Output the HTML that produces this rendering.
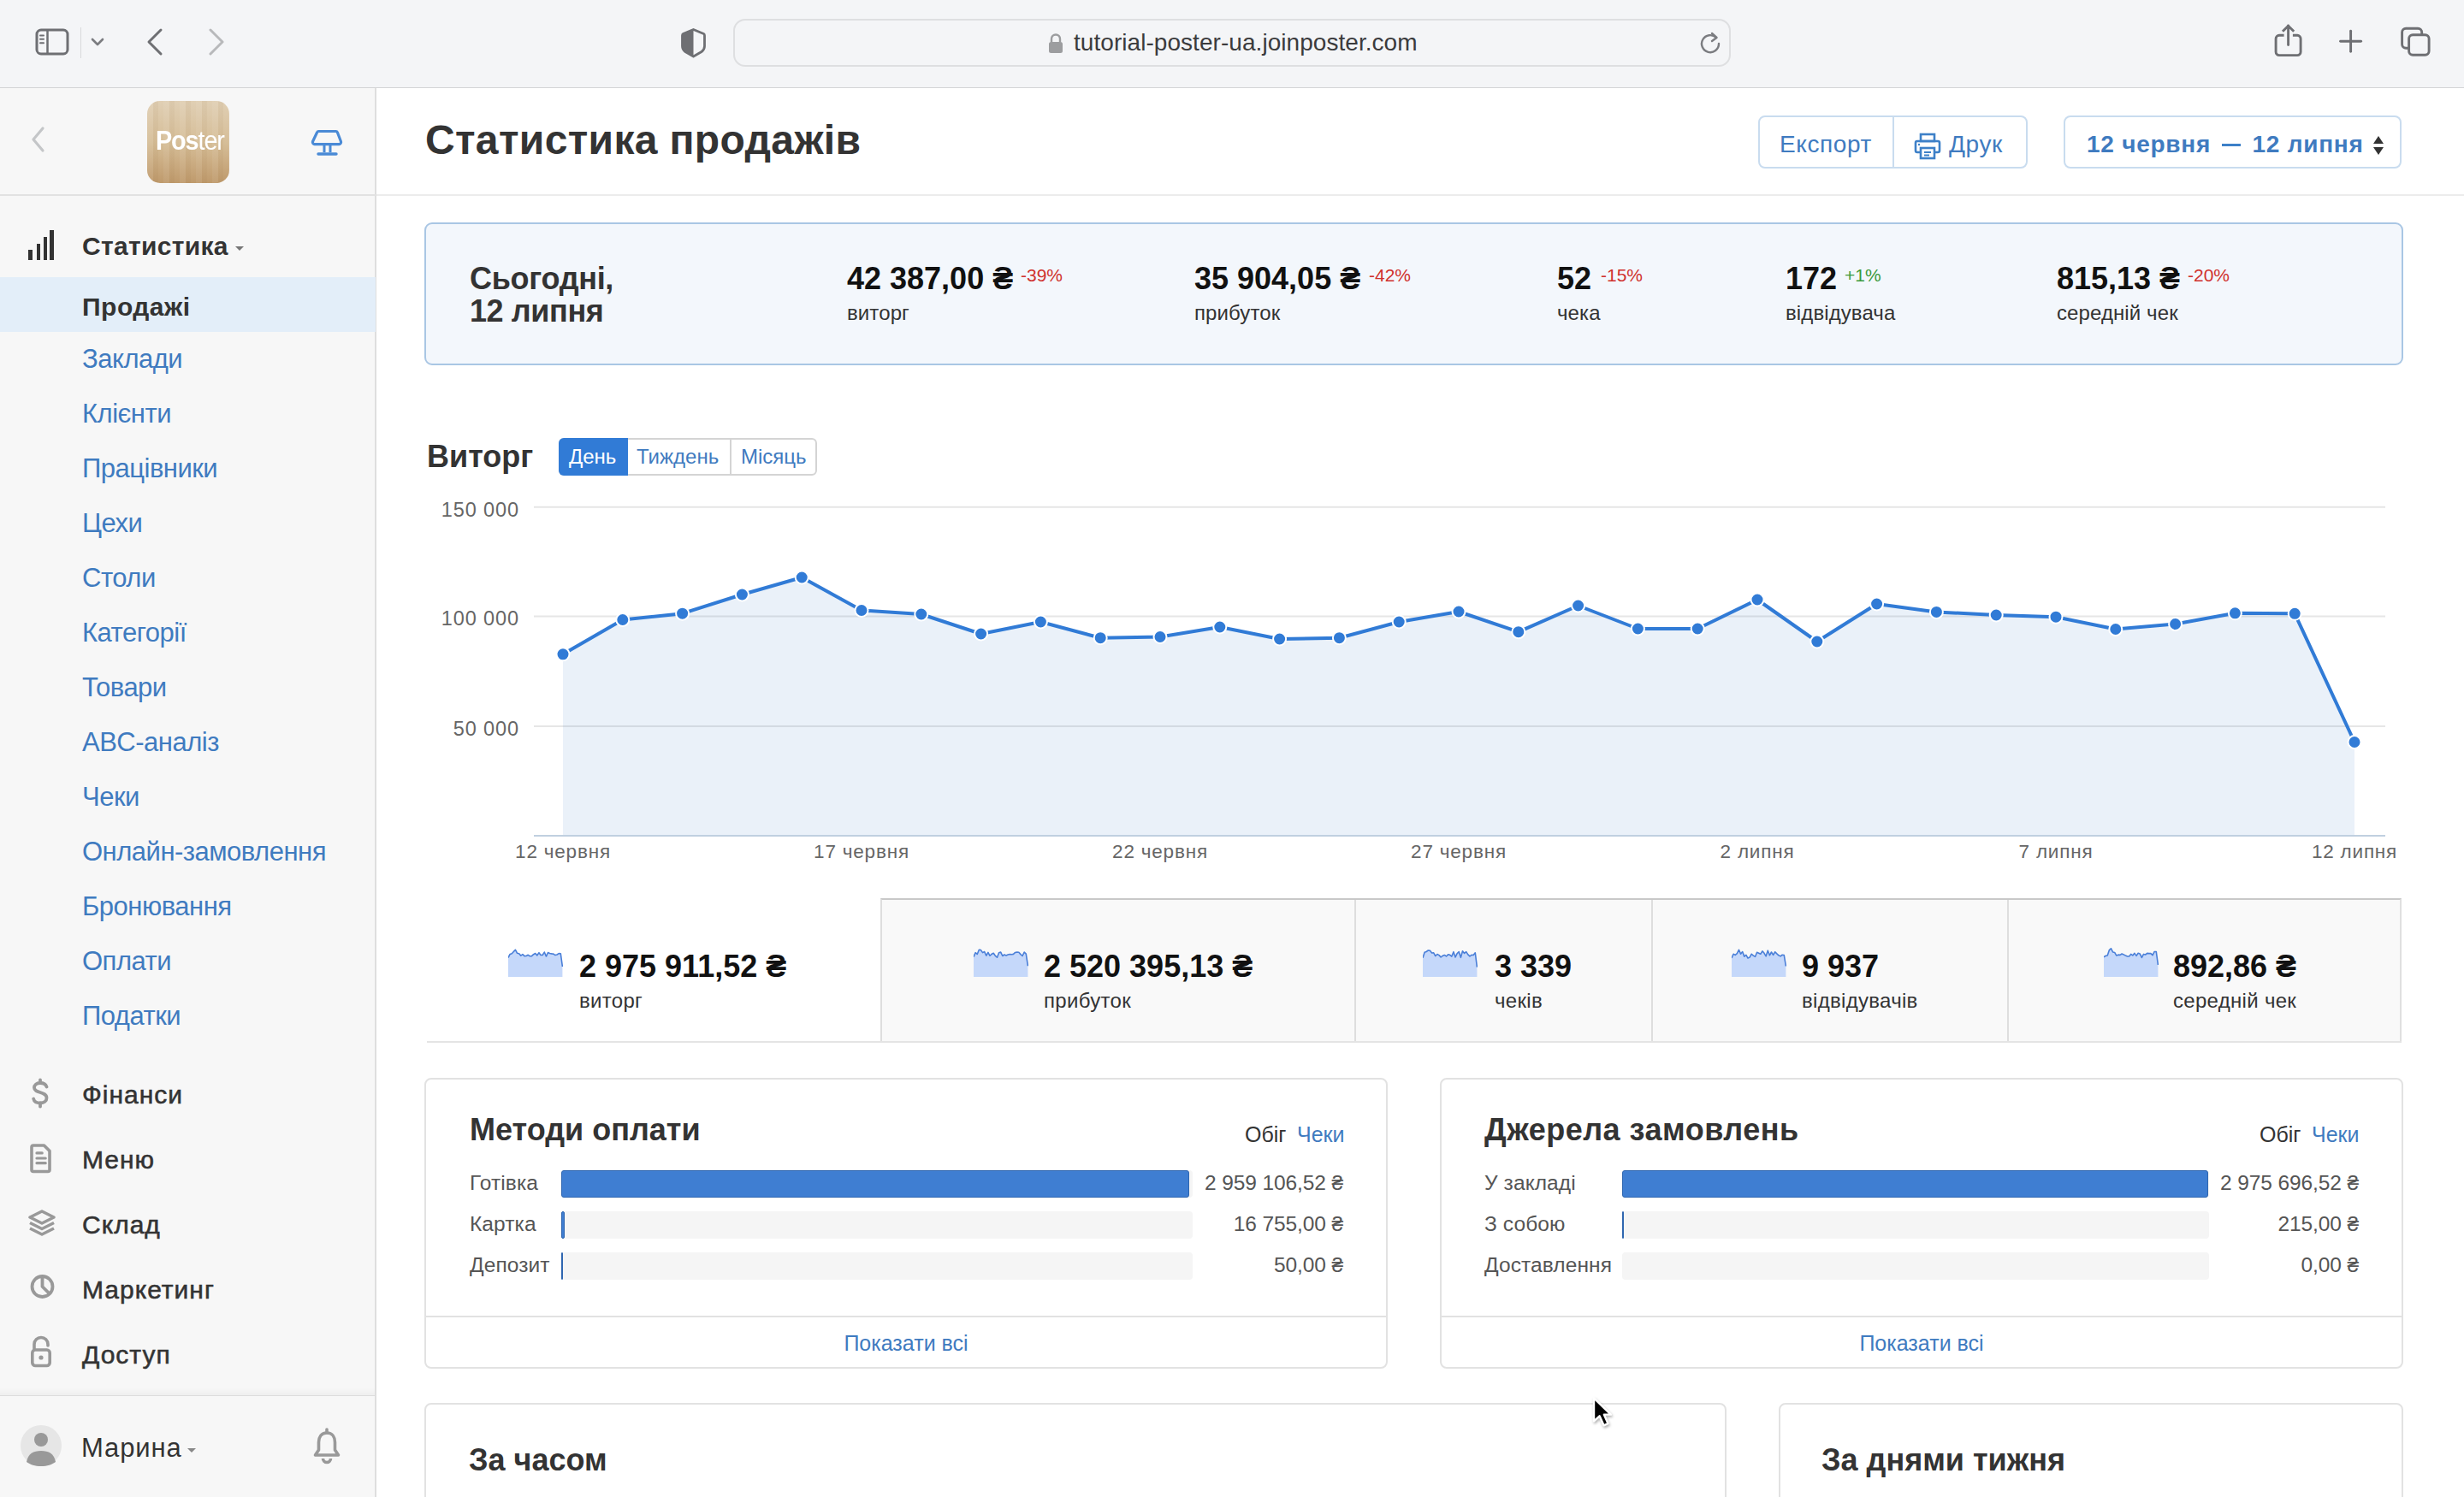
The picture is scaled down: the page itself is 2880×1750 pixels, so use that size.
<!DOCTYPE html>
<html><head><meta charset="utf-8"><title>Статистика продажів</title>
<style>
html,body{margin:0;padding:0;}
body{width:2880px;height:1750px;position:relative;overflow:hidden;background:#fff;font-family:"Liberation Sans", sans-serif;}
.r{position:absolute;}
.t{position:absolute;line-height:1;white-space:nowrap;}
</style></head><body>
<div class="r" style="left:0px;top:0px;width:2880px;height:102px;background:#f4f5f7;"></div>
<div class="r" style="left:0px;top:102px;width:2880px;height:1.3px;background:#d3d4d6;"></div>
<svg class="r" style="left:40px;top:32px" width="44" height="34" viewBox="0 0 44 34">
<rect x="3" y="3" width="36" height="28" rx="5" fill="none" stroke="#6e6f73" stroke-width="3"/>
<line x1="15.5" y1="3" x2="15.5" y2="31" stroke="#6e6f73" stroke-width="2.5"/>
<line x1="7" y1="9.5" x2="11" y2="9.5" stroke="#6e6f73" stroke-width="2" stroke-linecap="round"/>
<line x1="7" y1="13.8" x2="11" y2="13.8" stroke="#6e6f73" stroke-width="2" stroke-linecap="round"/>
<line x1="7" y1="18.2" x2="11" y2="18.2" stroke="#6e6f73" stroke-width="2" stroke-linecap="round"/>
</svg>
<div class="r" style="left:94px;top:32px;width:1px;height:36px;background:#d8d9db;"></div>
<svg class="r" style="left:104px;top:42px" width="20" height="14" viewBox="0 0 20 14">
<polyline points="4,4 10,10 16,4" fill="none" stroke="#7b7c80" stroke-width="2.6" stroke-linecap="round" stroke-linejoin="round"/></svg>
<svg class="r" style="left:168px;top:30px" width="26" height="38" viewBox="0 0 26 38">
<polyline points="20,5 6,19 20,33" fill="none" stroke="#6e6f73" stroke-width="3" stroke-linecap="round" stroke-linejoin="round"/></svg>
<svg class="r" style="left:240px;top:30px" width="26" height="38" viewBox="0 0 26 38">
<polyline points="6,5 20,19 6,33" fill="none" stroke="#b8b9bb" stroke-width="3" stroke-linecap="round" stroke-linejoin="round"/></svg>
<svg class="r" style="left:794px;top:30px" width="34" height="38" viewBox="0 0 34 38">
<path d="M16.5 4.5 L28.5 9.5 Q29.5 10 29.5 11.5 V24 Q29.5 28 26 30.5 L16.5 36 L7 30.5 Q3.5 28 3.5 24 V11.5 Q3.5 10 4.5 9.5 Z" fill="none" stroke="#6e6f73" stroke-width="2.8" stroke-linejoin="round"/>
<path d="M16.5 4 L4.5 9.5 Q3.5 10 3.5 11.5 V24 Q3.5 28 7 30.5 L16.5 36 Z" fill="#6e6f73"/></svg>
<div class="r" style="left:857px;top:22px;width:1166px;height:56px;background:#f4f5f7;border:2px solid #dedfe1;border-radius:14px;box-sizing:border-box;"></div>
<svg class="r" style="left:1224px;top:38px" width="20" height="26" viewBox="0 0 20 26">
<path d="M5 11 V7.5 a5 5 0 0 1 10 0 V11" fill="none" stroke="#9c9d9f" stroke-width="2.4"/>
<rect x="2" y="11" width="16" height="13" rx="2.5" fill="#9c9d9f"/></svg>
<div class="t " style="left:1255px;top:36.3px;font-size:28px;font-weight:400;color:#3b3b3d;letter-spacing:0.05px;">tutorial-poster-ua.joinposter.com</div>
<svg class="r" style="left:1984px;top:34px" width="30" height="32" viewBox="0 0 30 32">
<path d="M22 10 A10 10 0 1 0 25 17" fill="none" stroke="#7b7c80" stroke-width="2.4" stroke-linecap="round"/>
<polyline points="17,5 22.5,10 17,14" fill="none" stroke="#7b7c80" stroke-width="2.4" stroke-linecap="round" stroke-linejoin="round"/></svg>
<svg class="r" style="left:2654px;top:26px" width="42" height="44" viewBox="0 0 42 44">
<path d="M15.6 15.3 H10 a3.9 3.9 0 0 0 -3.9 3.9 V34.7 a3.9 3.9 0 0 0 3.9 3.9 H31.2 a3.9 3.9 0 0 0 3.9 -3.9 V19.2 a3.9 3.9 0 0 0 -3.9 -3.9 H25.9" fill="none" stroke="#6e6f73" stroke-width="2.9"/>
<line x1="20.6" y1="4" x2="20.6" y2="26.5" stroke="#6e6f73" stroke-width="2.9" stroke-linecap="round"/>
<polyline points="14,10.8 20.6,4.2 27.2,10.8" fill="none" stroke="#6e6f73" stroke-width="2.9" stroke-linejoin="round"/></svg>
<svg class="r" style="left:2730px;top:32px" width="34" height="34" viewBox="0 0 34 34">
<line x1="17.6" y1="4.2" x2="17.6" y2="28.2" stroke="#6e6f73" stroke-width="2.9" stroke-linecap="round"/>
<line x1="5.6" y1="16.2" x2="29.6" y2="16.2" stroke="#6e6f73" stroke-width="2.9" stroke-linecap="round"/></svg>
<svg class="r" style="left:2804px;top:30px" width="40" height="40" viewBox="0 0 40 40">
<rect x="3.6" y="3.3" width="23.1" height="23" rx="4.5" fill="none" stroke="#6e6f73" stroke-width="2.9"/>
<rect x="11.6" y="10.7" width="23.5" height="23.5" rx="4.5" fill="#f4f5f7" stroke="#6e6f73" stroke-width="2.9"/></svg>
<div class="r" style="left:0px;top:103px;width:439px;height:1647px;background:#f7f7f7;"></div>
<div class="r" style="left:438px;top:103px;width:2px;height:1647px;background:#dedede;"></div>
<div class="r" style="left:0px;top:227px;width:439px;height:2px;background:#e2e2e2;"></div>
<svg class="r" style="left:34px;top:146px" width="22" height="34" viewBox="0 0 22 34">
<polyline points="16,4 5,17 16,30" fill="none" stroke="#c4c6c8" stroke-width="3.2" stroke-linecap="round" stroke-linejoin="round"/></svg>
<div class="r" style="left:172px;top:118px;width:96px;height:96px;border-radius:15px;background:linear-gradient(180deg,#e0cfb4 0%,#d6be98 50%,#bf9a6c 100%);overflow:hidden;"></div>
<div class="r" style="left:172px;top:118px;width:96px;height:96px;border-radius:15px;background:repeating-linear-gradient(90deg,rgba(255,255,255,0.06) 0 7px,rgba(120,80,30,0.05) 7px 13px,rgba(255,255,255,0) 13px 19px);"></div>
<div class="t " style="left:182px;top:148.8px;font-size:31px;font-weight:300;color:#ffffff;letter-spacing:-1.2px;transform:scaleX(0.93);transform-origin:0 0;"><b style="font-weight:700">Pos</b>ter</div>
<svg class="r" style="left:362px;top:149px" width="40" height="36" viewBox="0 0 40 36">
<path d="M10.5 4.5 H30.5 a2 2 0 0 1 1.9 1.3 L36.5 16.5 a2.5 2.5 0 0 1 -2.3 3.2 H5.8 a2.5 2.5 0 0 1 -2.3 -3.2 L8.6 5.8 a2 2 0 0 1 1.9 -1.3 Z" fill="none" stroke="#4a8ad6" stroke-width="3.2" stroke-linejoin="round"/>
<line x1="17" y1="20" x2="17" y2="29" stroke="#4a8ad6" stroke-width="3"/>
<line x1="24" y1="20" x2="24" y2="29" stroke="#4a8ad6" stroke-width="3"/>
<line x1="10" y1="31" x2="31" y2="31" stroke="#4a8ad6" stroke-width="3.4" stroke-linecap="round"/></svg>
<div class="r" style="left:33px;top:292px;width:4.5px;height:11.5px;background:#333;"></div>
<div class="r" style="left:42.5px;top:285px;width:4.5px;height:18.5px;background:#333;"></div>
<div class="r" style="left:50.5px;top:277px;width:4.5px;height:26.5px;background:#333;"></div>
<div class="r" style="left:58px;top:268.5px;width:4.5px;height:35px;background:#333;"></div>
<div class="t " style="left:96px;top:273.1px;font-size:30px;font-weight:700;color:#333333;letter-spacing:0.3px;">Статистика</div>
<svg class="r" style="left:274px;top:287px" width="12" height="8" viewBox="0 0 12 8"><polygon points="1,1 11,1 6,6" fill="#777"/></svg>
<div class="r" style="left:0px;top:324px;width:439px;height:64px;background:#e3eef9;"></div>
<div class="t " style="left:96px;top:343.6px;font-size:30px;font-weight:700;color:#333333;letter-spacing:0.5px;">Продажі</div>
<div class="t " style="left:96px;top:403.8px;font-size:31px;font-weight:400;color:#3f7bc0;letter-spacing:-0.5px;">Заклади</div>
<div class="t " style="left:96px;top:467.8px;font-size:31px;font-weight:400;color:#3f7bc0;letter-spacing:-0.5px;">Клієнти</div>
<div class="t " style="left:96px;top:531.8px;font-size:31px;font-weight:400;color:#3f7bc0;letter-spacing:-0.5px;">Працівники</div>
<div class="t " style="left:96px;top:595.8px;font-size:31px;font-weight:400;color:#3f7bc0;letter-spacing:-0.5px;">Цехи</div>
<div class="t " style="left:96px;top:659.8px;font-size:31px;font-weight:400;color:#3f7bc0;letter-spacing:-0.5px;">Столи</div>
<div class="t " style="left:96px;top:723.8px;font-size:31px;font-weight:400;color:#3f7bc0;letter-spacing:-0.5px;">Категорії</div>
<div class="t " style="left:96px;top:787.8px;font-size:31px;font-weight:400;color:#3f7bc0;letter-spacing:-0.5px;">Товари</div>
<div class="t " style="left:96px;top:851.8px;font-size:31px;font-weight:400;color:#3f7bc0;letter-spacing:-0.5px;">ABC-аналіз</div>
<div class="t " style="left:96px;top:915.8px;font-size:31px;font-weight:400;color:#3f7bc0;letter-spacing:-0.5px;">Чеки</div>
<div class="t " style="left:96px;top:979.8px;font-size:31px;font-weight:400;color:#3f7bc0;letter-spacing:-0.5px;">Онлайн-замовлення</div>
<div class="t " style="left:96px;top:1043.8px;font-size:31px;font-weight:400;color:#3f7bc0;letter-spacing:-0.5px;">Бронювання</div>
<div class="t " style="left:96px;top:1107.8px;font-size:31px;font-weight:400;color:#3f7bc0;letter-spacing:-0.5px;">Оплати</div>
<div class="t " style="left:96px;top:1171.8px;font-size:31px;font-weight:400;color:#3f7bc0;letter-spacing:-0.5px;">Податки</div>
<div class="t " style="left:96px;top:1264.6px;font-size:30px;font-weight:400;color:#333333;letter-spacing:1.0px;-webkit-text-stroke:0.55px #333;">Фінанси</div>
<div class="t " style="left:96px;top:1340.6px;font-size:30px;font-weight:400;color:#333333;letter-spacing:1.0px;-webkit-text-stroke:0.55px #333;">Меню</div>
<div class="t " style="left:96px;top:1416.6px;font-size:30px;font-weight:400;color:#333333;letter-spacing:1.0px;-webkit-text-stroke:0.55px #333;">Склад</div>
<div class="t " style="left:96px;top:1492.6px;font-size:30px;font-weight:400;color:#333333;letter-spacing:1.0px;-webkit-text-stroke:0.55px #333;">Маркетинг</div>
<div class="t " style="left:96px;top:1568.6px;font-size:30px;font-weight:400;color:#333333;letter-spacing:1.0px;-webkit-text-stroke:0.55px #333;">Доступ</div>
<svg class="r" style="left:30px;top:1260px" width="34" height="38" viewBox="0 0 34 38">
<path d="M24.5 10.5 C23.5 7.5 20.5 6 17 6 C12.5 6 10 8.5 10 11.5 C10 18.5 24.5 15.5 24.5 23.5 C24.5 27 21.5 29.5 17 29.5 C12.5 29.5 9.8 27.5 9.2 24.5" fill="none" stroke="#999" stroke-width="3.8" stroke-linecap="round"/>
<line x1="17" y1="2.5" x2="17" y2="6" stroke="#999" stroke-width="3.8" stroke-linecap="round"/>
<line x1="17" y1="29.5" x2="17" y2="33.5" stroke="#999" stroke-width="3.8" stroke-linecap="round"/></svg>
<svg class="r" style="left:34px;top:1335px" width="28" height="38" viewBox="0 0 28 38">
<path d="M5 4 H17.5 L24 10.5 V32.5 a2 2 0 0 1 -2 2 H5 a2 2 0 0 1 -2 -2 V6 a2 2 0 0 1 2 -2 Z" fill="none" stroke="#999" stroke-width="3.6" stroke-linejoin="round"/>
<line x1="9" y1="12.9" x2="15.2" y2="12.9" stroke="#999" stroke-width="3.2" stroke-linecap="round"/>
<line x1="9" y1="19" x2="19.2" y2="19" stroke="#999" stroke-width="3.2" stroke-linecap="round"/>
<line x1="9" y1="24.7" x2="19.2" y2="24.7" stroke="#999" stroke-width="3.2" stroke-linecap="round"/></svg>
<svg class="r" style="left:31px;top:1412px" width="36" height="36" viewBox="0 0 36 36">
<path d="M18 4 L32 11 L18 18 L4 11 Z" fill="none" stroke="#999" stroke-width="3.6" stroke-linejoin="round"/>
<path d="M4 17.5 L18 24.5 L32 17.5" fill="none" stroke="#999" stroke-width="3.6" stroke-linejoin="round"/>
<path d="M4 24 L18 31 L32 24" fill="none" stroke="#999" stroke-width="3.6" stroke-linejoin="round"/></svg>
<svg class="r" style="left:34px;top:1487px" width="34" height="34" viewBox="0 0 34 34">
<circle cx="15.5" cy="17" r="12" fill="none" stroke="#999" stroke-width="3.8"/>
<path d="M15.5 5 V17 L24.5 26" fill="none" stroke="#999" stroke-width="3.8" stroke-linejoin="round"/></svg>
<svg class="r" style="left:34px;top:1561px" width="28" height="40" viewBox="0 0 28 40">
<path d="M6 16 V10.5 a8 8 0 0 1 16 0 V12" fill="none" stroke="#999" stroke-width="3.6" stroke-linecap="round"/>
<rect x="3.8" y="17" width="20.4" height="18.5" rx="3.5" fill="none" stroke="#999" stroke-width="3.6"/>
<circle cx="14" cy="26" r="2.6" fill="#999"/></svg>
<div class="r" style="left:0px;top:1622px;width:438px;height:9px;background:linear-gradient(180deg,rgba(0,0,0,0) 0%,rgba(0,0,0,0.035) 100%);"></div>
<div class="r" style="left:0px;top:1630.5px;width:438px;height:1.6px;background:#dcdcdc;"></div>
<svg class="r" style="left:24px;top:1666px" width="48" height="48" viewBox="0 0 48 48">
<circle cx="24" cy="24" r="24" fill="#e6e6e6"/>
<circle cx="24" cy="17" r="8" fill="#999"/>
<path d="M7 43 C9 33 15 30 24 30 C33 30 39 33 41 43 C37 46 31 48 24 48 C17 48 11 46 7 43 Z" fill="#999"/></svg>
<div class="t " style="left:95px;top:1676.8px;font-size:31px;font-weight:400;color:#333333;letter-spacing:0.9px;">Марина</div>
<svg class="r" style="left:218px;top:1692px" width="12" height="8" viewBox="0 0 12 8"><polygon points="1,1 11,1 6,6" fill="#888"/></svg>
<svg class="r" style="left:364px;top:1668px" width="36" height="46" viewBox="0 0 36 46">
<path d="M18 7 C11.5 7 8.5 12 8.5 18 V27 L4.5 33 H31.5 L27.5 27 V18 C27.5 12 24.5 7 18 7 Z" fill="none" stroke="#999" stroke-width="3.6" stroke-linejoin="round"/>
<line x1="18" y1="3" x2="18" y2="7" stroke="#999" stroke-width="3.6" stroke-linecap="round"/>
<path d="M13.5 37 a4.5 4.5 0 0 0 9 0" fill="none" stroke="#999" stroke-width="3.6"/></svg>
<div class="r" style="left:440px;top:227px;width:2440px;height:2px;background:#ececec;"></div>
<div class="t " style="left:497px;top:140.4px;font-size:48px;font-weight:700;color:#333333;letter-spacing:0.35px;">Статистика продажів</div>
<div class="r" style="left:2055px;top:135px;width:315px;height:62px;border:2px solid #c9dcef;border-radius:8px;box-sizing:border-box;background:#fff;"></div>
<div class="r" style="left:2212px;top:135px;width:2px;height:62px;background:#c9dcef;"></div>
<div class="t " style="left:2080px;top:155.0px;font-size:28px;font-weight:400;color:#3f7bc0;letter-spacing:0.6px;">Експорт</div>
<svg class="r" style="left:2236px;top:154px" width="34" height="34" viewBox="0 0 34 34">
<rect x="9" y="3" width="16" height="8" fill="none" stroke="#3d80c8" stroke-width="2.6"/>
<path d="M8 24 H5 a2 2 0 0 1 -2 -2 V13 a2 2 0 0 1 2 -2 H29 a2 2 0 0 1 2 2 V22 a2 2 0 0 1 -2 2 H26" fill="none" stroke="#3d80c8" stroke-width="2.6"/>
<rect x="9" y="19" width="16" height="12" fill="#fff" stroke="#3d80c8" stroke-width="2.6"/>
<line x1="13" y1="24" x2="21" y2="24" stroke="#3d80c8" stroke-width="2"/>
<line x1="13" y1="27.5" x2="19" y2="27.5" stroke="#3d80c8" stroke-width="2"/>
<circle cx="7" cy="15" r="1.2" fill="#3d80c8"/></svg>
<div class="t " style="left:2278px;top:155.0px;font-size:28px;font-weight:400;color:#3f7bc0;letter-spacing:0.6px;">Друк</div>
<div class="r" style="left:2412px;top:135px;width:395px;height:62px;border:2px solid #c9dcef;border-radius:8px;box-sizing:border-box;background:#fff;"></div>
<div class="t " style="left:2439px;top:155.0px;font-size:28px;font-weight:700;color:#3f7bc0;letter-spacing:0.75px;">12 червня</div>
<div class="r" style="left:2597px;top:167.5px;width:22px;height:3.2px;background:#3d80c8;"></div>
<div class="t " style="left:2632.5px;top:155.0px;font-size:28px;font-weight:700;color:#3f7bc0;letter-spacing:0.75px;">12 липня</div>
<svg class="r" style="left:2772px;top:157px" width="16" height="26" viewBox="0 0 16 26">
<polygon points="8,2 14,11 2,11" fill="#333"/><polygon points="2,15 14,15 8,24" fill="#333"/></svg>
<div class="r" style="left:496px;top:260px;width:2313px;height:167px;background:#f3f7fc;border:2px solid #a9c6e4;border-radius:9px;box-sizing:border-box;"></div>
<div class="t " style="left:549px;top:307.5px;font-size:36px;font-weight:700;color:#333333;letter-spacing:-0.3px;">Сьогодні,</div>
<div class="t " style="left:549px;top:345.5px;font-size:36px;font-weight:700;color:#333333;letter-spacing:-0.4px;">12 липня</div>
<div class="t " style="left:990px;top:307.5px;font-size:36px;font-weight:700;color:#111;">42 387,00 ₴</div>
<div class="t " style="left:1193px;top:311.2px;font-size:21px;font-weight:400;color:#d0312d;">-39%</div>
<div class="t " style="left:990px;top:353.7px;font-size:24px;font-weight:400;color:#333333;letter-spacing:0.1px;">виторг</div>
<div class="t " style="left:1396px;top:307.5px;font-size:36px;font-weight:700;color:#111;">35 904,05 ₴</div>
<div class="t " style="left:1600px;top:311.2px;font-size:21px;font-weight:400;color:#d0312d;">-42%</div>
<div class="t " style="left:1396px;top:353.7px;font-size:24px;font-weight:400;color:#333333;letter-spacing:0.1px;">прибуток</div>
<div class="t " style="left:1820px;top:307.5px;font-size:36px;font-weight:700;color:#111;">52</div>
<div class="t " style="left:1871px;top:311.2px;font-size:21px;font-weight:400;color:#d0312d;">-15%</div>
<div class="t " style="left:1820px;top:353.7px;font-size:24px;font-weight:400;color:#333333;letter-spacing:0.1px;">чека</div>
<div class="t " style="left:2087px;top:307.5px;font-size:36px;font-weight:700;color:#111;">172</div>
<div class="t " style="left:2156px;top:311.2px;font-size:21px;font-weight:400;color:#3b9a3b;">+1%</div>
<div class="t " style="left:2087px;top:353.7px;font-size:24px;font-weight:400;color:#333333;letter-spacing:0.1px;">відвідувача</div>
<div class="t " style="left:2404px;top:307.5px;font-size:36px;font-weight:700;color:#111;">815,13 ₴</div>
<div class="t " style="left:2557px;top:311.2px;font-size:21px;font-weight:400;color:#d0312d;">-20%</div>
<div class="t " style="left:2404px;top:353.7px;font-size:24px;font-weight:400;color:#333333;letter-spacing:0.1px;">середній чек</div>
<div class="t " style="left:499px;top:515.5px;font-size:36px;font-weight:700;color:#333333;">Виторг</div>
<div class="r" style="left:653px;top:512px;width:302px;height:44px;border:2px solid #d4d4d4;border-radius:6px;box-sizing:border-box;background:#fff;"></div>
<div class="r" style="left:653px;top:512px;width:81px;height:44px;background:#317bd6;border-radius:6px 0 0 6px;"></div>
<div class="r" style="left:853px;top:512px;width:2px;height:44px;background:#d4d4d4;"></div>
<div class="t " style="left:665px;top:521.7px;font-size:24px;font-weight:400;color:#fff;">День</div>
<div class="t " style="left:744px;top:521.7px;font-size:24px;font-weight:400;color:#3f7bc0;">Тиждень</div>
<div class="t " style="left:866px;top:521.7px;font-size:24px;font-weight:400;color:#3f7bc0;">Місяць</div>
<svg class="r" style="left:0;top:0" width="2880" height="1750" viewBox="0 0 2880 1750">
<line x1="624" y1="592.7" x2="2788" y2="592.7" stroke="#e6e6e6" stroke-width="2"/>
<line x1="624" y1="720.5" x2="2788" y2="720.5" stroke="#e6e6e6" stroke-width="2"/>
<line x1="624" y1="849" x2="2788" y2="849" stroke="#e6e6e6" stroke-width="2"/>
<polygon points="658,977 658.0,764.8 727.8,724.5 797.6,717.2 867.4,695.0 937.2,675.0 1007.0,713.5 1076.8,718.0 1146.6,741.0 1216.4,727.0 1286.2,745.7 1356.0,744.5 1425.8,733.0 1495.6,747.0 1565.4,745.7 1635.2,727.0 1705.0,715.0 1774.8,738.7 1844.6,708.0 1914.4,735.0 1984.2,735.0 2054.0,701.0 2123.8,750.0 2193.6,706.0 2263.4,715.4 2333.2,719.0 2403.0,721.2 2472.8,735.5 2542.6,729.5 2612.4,716.8 2682.2,717.3 2752.0,867.5 2752,977" fill="rgba(61,128,200,0.11)"/>
<line x1="624" y1="977" x2="2788" y2="977" stroke="#c0d0e0" stroke-width="2"/>
<polyline points="658.0,764.8 727.8,724.5 797.6,717.2 867.4,695.0 937.2,675.0 1007.0,713.5 1076.8,718.0 1146.6,741.0 1216.4,727.0 1286.2,745.7 1356.0,744.5 1425.8,733.0 1495.6,747.0 1565.4,745.7 1635.2,727.0 1705.0,715.0 1774.8,738.7 1844.6,708.0 1914.4,735.0 1984.2,735.0 2054.0,701.0 2123.8,750.0 2193.6,706.0 2263.4,715.4 2333.2,719.0 2403.0,721.2 2472.8,735.5 2542.6,729.5 2612.4,716.8 2682.2,717.3 2752.0,867.5" fill="none" stroke="#317bd6" stroke-width="4" stroke-linejoin="round"/>
<circle cx="658.0" cy="764.8" r="7.5" fill="#317bd6" stroke="#fff" stroke-width="2"/>
<circle cx="727.8" cy="724.5" r="7.5" fill="#317bd6" stroke="#fff" stroke-width="2"/>
<circle cx="797.6" cy="717.2" r="7.5" fill="#317bd6" stroke="#fff" stroke-width="2"/>
<circle cx="867.4" cy="695.0" r="7.5" fill="#317bd6" stroke="#fff" stroke-width="2"/>
<circle cx="937.2" cy="675.0" r="7.5" fill="#317bd6" stroke="#fff" stroke-width="2"/>
<circle cx="1007.0" cy="713.5" r="7.5" fill="#317bd6" stroke="#fff" stroke-width="2"/>
<circle cx="1076.8" cy="718.0" r="7.5" fill="#317bd6" stroke="#fff" stroke-width="2"/>
<circle cx="1146.6" cy="741.0" r="7.5" fill="#317bd6" stroke="#fff" stroke-width="2"/>
<circle cx="1216.4" cy="727.0" r="7.5" fill="#317bd6" stroke="#fff" stroke-width="2"/>
<circle cx="1286.2" cy="745.7" r="7.5" fill="#317bd6" stroke="#fff" stroke-width="2"/>
<circle cx="1356.0" cy="744.5" r="7.5" fill="#317bd6" stroke="#fff" stroke-width="2"/>
<circle cx="1425.8" cy="733.0" r="7.5" fill="#317bd6" stroke="#fff" stroke-width="2"/>
<circle cx="1495.6" cy="747.0" r="7.5" fill="#317bd6" stroke="#fff" stroke-width="2"/>
<circle cx="1565.4" cy="745.7" r="7.5" fill="#317bd6" stroke="#fff" stroke-width="2"/>
<circle cx="1635.2" cy="727.0" r="7.5" fill="#317bd6" stroke="#fff" stroke-width="2"/>
<circle cx="1705.0" cy="715.0" r="7.5" fill="#317bd6" stroke="#fff" stroke-width="2"/>
<circle cx="1774.8" cy="738.7" r="7.5" fill="#317bd6" stroke="#fff" stroke-width="2"/>
<circle cx="1844.6" cy="708.0" r="7.5" fill="#317bd6" stroke="#fff" stroke-width="2"/>
<circle cx="1914.4" cy="735.0" r="7.5" fill="#317bd6" stroke="#fff" stroke-width="2"/>
<circle cx="1984.2" cy="735.0" r="7.5" fill="#317bd6" stroke="#fff" stroke-width="2"/>
<circle cx="2054.0" cy="701.0" r="7.5" fill="#317bd6" stroke="#fff" stroke-width="2"/>
<circle cx="2123.8" cy="750.0" r="7.5" fill="#317bd6" stroke="#fff" stroke-width="2"/>
<circle cx="2193.6" cy="706.0" r="7.5" fill="#317bd6" stroke="#fff" stroke-width="2"/>
<circle cx="2263.4" cy="715.4" r="7.5" fill="#317bd6" stroke="#fff" stroke-width="2"/>
<circle cx="2333.2" cy="719.0" r="7.5" fill="#317bd6" stroke="#fff" stroke-width="2"/>
<circle cx="2403.0" cy="721.2" r="7.5" fill="#317bd6" stroke="#fff" stroke-width="2"/>
<circle cx="2472.8" cy="735.5" r="7.5" fill="#317bd6" stroke="#fff" stroke-width="2"/>
<circle cx="2542.6" cy="729.5" r="7.5" fill="#317bd6" stroke="#fff" stroke-width="2"/>
<circle cx="2612.4" cy="716.8" r="7.5" fill="#317bd6" stroke="#fff" stroke-width="2"/>
<circle cx="2682.2" cy="717.3" r="7.5" fill="#317bd6" stroke="#fff" stroke-width="2"/>
<circle cx="2752.0" cy="867.5" r="7.5" fill="#317bd6" stroke="#fff" stroke-width="2"/>
</svg>
<div class="t " style="right:2273px;top:584.6px;font-size:23.5px;font-weight:400;color:#666;text-align:right;letter-spacing:0.9px;">150 000</div>
<div class="t " style="right:2273px;top:712.1px;font-size:23.5px;font-weight:400;color:#666;text-align:right;letter-spacing:0.9px;">100 000</div>
<div class="t " style="right:2273px;top:840.6px;font-size:23.5px;font-weight:400;color:#666;text-align:right;letter-spacing:0.9px;">50 000</div>
<div class="t " style="left:58.0px;width:1200px;top:985.0px;font-size:22.5px;font-weight:400;color:#666;text-align:center;letter-spacing:0.8px;">12 червня</div>
<div class="t " style="left:407.0px;width:1200px;top:985.0px;font-size:22.5px;font-weight:400;color:#666;text-align:center;letter-spacing:0.8px;">17 червня</div>
<div class="t " style="left:756.0px;width:1200px;top:985.0px;font-size:22.5px;font-weight:400;color:#666;text-align:center;letter-spacing:0.8px;">22 червня</div>
<div class="t " style="left:1105.0px;width:1200px;top:985.0px;font-size:22.5px;font-weight:400;color:#666;text-align:center;letter-spacing:0.8px;">27 червня</div>
<div class="t " style="left:1454.0px;width:1200px;top:985.0px;font-size:22.5px;font-weight:400;color:#666;text-align:center;letter-spacing:0.8px;">2 липня</div>
<div class="t " style="left:1803.0px;width:1200px;top:985.0px;font-size:22.5px;font-weight:400;color:#666;text-align:center;letter-spacing:0.8px;">7 липня</div>
<div class="t " style="left:2152.0px;width:1200px;top:985.0px;font-size:22.5px;font-weight:400;color:#666;text-align:center;letter-spacing:0.8px;">12 липня</div>
<div class="r" style="left:1029px;top:1050px;width:1778px;height:169px;background:#f9f9f9;border-top:2px solid #c8c8c8;border-left:2px solid #dedede;border-right:2px solid #e0e0e0;box-sizing:border-box;"></div>
<div class="r" style="left:1583px;top:1052px;width:2px;height:166px;background:#dedede;"></div>
<div class="r" style="left:1930px;top:1052px;width:2px;height:166px;background:#dedede;"></div>
<div class="r" style="left:2346px;top:1052px;width:2px;height:166px;background:#dedede;"></div>
<svg class="r" style="left:594px;top:1108px" width="64" height="34" viewBox="0 0 64 34"><polygon points="0,34 0.00,11.54 2.11,7.44 4.23,6.70 6.34,4.44 8.45,2.40 10.57,6.32 12.68,6.78 14.79,9.12 16.91,7.69 19.02,9.60 21.13,9.48 23.25,8.30 25.36,9.73 27.47,9.60 29.59,7.69 31.70,6.47 33.81,8.88 35.93,5.76 38.04,8.51 40.15,8.51 42.27,5.05 44.38,10.04 46.49,5.56 48.61,6.51 50.72,6.88 52.83,7.10 54.95,8.56 57.06,7.95 59.17,6.66 61.29,6.71 63.40,22.00 63.4,34" fill="#c5d8fa"/><polyline points="0.00,11.54 2.11,7.44 4.23,6.70 6.34,4.44 8.45,2.40 10.57,6.32 12.68,6.78 14.79,9.12 16.91,7.69 19.02,9.60 21.13,9.48 23.25,8.30 25.36,9.73 27.47,9.60 29.59,7.69 31.70,6.47 33.81,8.88 35.93,5.76 38.04,8.51 40.15,8.51 42.27,5.05 44.38,10.04 46.49,5.56 48.61,6.51 50.72,6.88 52.83,7.10 54.95,8.56 57.06,7.95 59.17,6.66 61.29,6.71 63.40,22.00" fill="none" stroke="#4a7fd8" stroke-width="1.6" stroke-linejoin="round"/></svg>
<div class="t " style="left:677px;top:1111.5px;font-size:36px;font-weight:700;color:#111;">2 975 911,52 ₴</div>
<div class="t " style="left:677px;top:1157.7px;font-size:24px;font-weight:400;color:#333333;letter-spacing:0.3px;">виторг</div>
<svg class="r" style="left:1138px;top:1108px" width="64" height="34" viewBox="0 0 64 34"><polygon points="0,34 0.00,10.66 2.11,5.69 4.23,7.45 6.34,2.30 8.45,2.58 10.57,5.65 12.68,4.57 14.79,9.16 16.91,5.38 19.02,9.27 21.13,7.32 23.25,6.26 25.36,9.35 27.47,11.23 29.59,5.81 31.70,5.09 33.81,9.52 35.93,8.00 38.04,8.89 40.15,7.99 42.27,7.43 44.38,7.77 46.49,7.35 48.61,5.46 50.72,5.10 52.83,5.19 54.95,7.60 57.06,9.53 59.17,5.06 61.29,7.11 63.40,21.23 63.4,34" fill="#c5d8fa"/><polyline points="0.00,10.66 2.11,5.69 4.23,7.45 6.34,2.30 8.45,2.58 10.57,5.65 12.68,4.57 14.79,9.16 16.91,5.38 19.02,9.27 21.13,7.32 23.25,6.26 25.36,9.35 27.47,11.23 29.59,5.81 31.70,5.09 33.81,9.52 35.93,8.00 38.04,8.89 40.15,7.99 42.27,7.43 44.38,7.77 46.49,7.35 48.61,5.46 50.72,5.10 52.83,5.19 54.95,7.60 57.06,9.53 59.17,5.06 61.29,7.11 63.40,21.23" fill="none" stroke="#4a7fd8" stroke-width="1.6" stroke-linejoin="round"/></svg>
<div class="t " style="left:1220px;top:1111.5px;font-size:36px;font-weight:700;color:#111;">2 520 395,13 ₴</div>
<div class="t " style="left:1220px;top:1157.7px;font-size:24px;font-weight:400;color:#333333;letter-spacing:0.3px;">прибуток</div>
<svg class="r" style="left:1663px;top:1108px" width="64" height="34" viewBox="0 0 64 34"><polygon points="0,34 0.00,11.78 2.11,5.25 4.23,4.49 6.34,2.97 8.45,3.30 10.57,5.96 12.68,5.85 14.79,9.55 16.91,7.46 19.02,8.60 21.13,10.95 23.25,9.30 25.36,8.45 27.47,9.97 29.59,7.82 31.70,8.35 33.81,10.03 35.93,4.70 38.04,10.91 40.15,6.60 42.27,4.64 44.38,11.32 46.49,3.82 48.61,6.46 50.72,4.58 52.83,7.94 54.95,9.88 57.06,8.31 59.17,8.53 61.29,5.77 63.40,22.57 63.4,34" fill="#c5d8fa"/><polyline points="0.00,11.78 2.11,5.25 4.23,4.49 6.34,2.97 8.45,3.30 10.57,5.96 12.68,5.85 14.79,9.55 16.91,7.46 19.02,8.60 21.13,10.95 23.25,9.30 25.36,8.45 27.47,9.97 29.59,7.82 31.70,8.35 33.81,10.03 35.93,4.70 38.04,10.91 40.15,6.60 42.27,4.64 44.38,11.32 46.49,3.82 48.61,6.46 50.72,4.58 52.83,7.94 54.95,9.88 57.06,8.31 59.17,8.53 61.29,5.77 63.40,22.57" fill="none" stroke="#4a7fd8" stroke-width="1.6" stroke-linejoin="round"/></svg>
<div class="t " style="left:1747px;top:1111.5px;font-size:36px;font-weight:700;color:#111;">3 339</div>
<div class="t " style="left:1747px;top:1157.7px;font-size:24px;font-weight:400;color:#333333;letter-spacing:0.3px;">чеків</div>
<svg class="r" style="left:2024px;top:1108px" width="64" height="34" viewBox="0 0 64 34"><polygon points="0,34 0.00,11.94 2.11,7.22 4.23,8.40 6.34,6.66 8.45,2.27 10.57,7.14 12.68,4.58 14.79,10.13 16.91,8.43 19.02,12.06 21.13,11.08 23.25,7.23 25.36,9.16 27.47,10.44 29.59,5.31 31.70,6.28 33.81,7.22 35.93,3.84 38.04,6.30 40.15,9.85 42.27,3.19 44.38,8.77 46.49,5.01 48.61,8.37 50.72,4.78 52.83,6.85 54.95,8.81 57.06,9.87 59.17,8.25 61.29,8.53 63.40,21.49 63.4,34" fill="#c5d8fa"/><polyline points="0.00,11.94 2.11,7.22 4.23,8.40 6.34,6.66 8.45,2.27 10.57,7.14 12.68,4.58 14.79,10.13 16.91,8.43 19.02,12.06 21.13,11.08 23.25,7.23 25.36,9.16 27.47,10.44 29.59,5.31 31.70,6.28 33.81,7.22 35.93,3.84 38.04,6.30 40.15,9.85 42.27,3.19 44.38,8.77 46.49,5.01 48.61,8.37 50.72,4.78 52.83,6.85 54.95,8.81 57.06,9.87 59.17,8.25 61.29,8.53 63.40,21.49" fill="none" stroke="#4a7fd8" stroke-width="1.6" stroke-linejoin="round"/></svg>
<div class="t " style="left:2106px;top:1111.5px;font-size:36px;font-weight:700;color:#111;">9 937</div>
<div class="t " style="left:2106px;top:1157.7px;font-size:24px;font-weight:400;color:#333333;letter-spacing:0.3px;">відвідувачів</div>
<svg class="r" style="left:2459px;top:1108px" width="64" height="34" viewBox="0 0 64 34"><polygon points="0,34 0.00,10.84 2.11,9.36 4.23,8.98 6.34,2.69 8.45,0.78 10.57,4.98 12.68,5.44 14.79,9.04 16.91,8.14 19.02,8.41 21.13,7.00 23.25,7.90 25.36,9.08 27.47,9.93 29.59,9.96 31.70,7.42 33.81,8.96 35.93,6.35 38.04,9.39 40.15,6.28 42.27,7.04 44.38,11.43 46.49,7.43 48.61,8.00 50.72,6.34 52.83,6.60 54.95,6.58 57.06,8.62 59.17,4.47 61.29,4.54 63.40,19.97 63.4,34" fill="#c5d8fa"/><polyline points="0.00,10.84 2.11,9.36 4.23,8.98 6.34,2.69 8.45,0.78 10.57,4.98 12.68,5.44 14.79,9.04 16.91,8.14 19.02,8.41 21.13,7.00 23.25,7.90 25.36,9.08 27.47,9.93 29.59,9.96 31.70,7.42 33.81,8.96 35.93,6.35 38.04,9.39 40.15,6.28 42.27,7.04 44.38,11.43 46.49,7.43 48.61,8.00 50.72,6.34 52.83,6.60 54.95,6.58 57.06,8.62 59.17,4.47 61.29,4.54 63.40,19.97" fill="none" stroke="#4a7fd8" stroke-width="1.6" stroke-linejoin="round"/></svg>
<div class="t " style="left:2540px;top:1111.5px;font-size:36px;font-weight:700;color:#111;">892,86 ₴</div>
<div class="t " style="left:2540px;top:1157.7px;font-size:24px;font-weight:400;color:#333333;letter-spacing:0.3px;">середній чек</div>
<div class="r" style="left:499px;top:1217px;width:2308px;height:2px;background:#e4e4e4;"></div>
<div class="r" style="left:496px;top:1260px;width:1126px;height:340px;border:2px solid #e2e2e2;border-radius:8px;box-sizing:border-box;background:#fff;"></div>
<div class="r" style="left:496px;top:1538px;width:1126px;height:2px;background:#e2e2e2;"></div>
<div class="t " style="left:549px;top:1302.5px;font-size:36px;font-weight:700;color:#333333;">Методи оплати</div>
<div class="t " style="left:1455px;top:1313.8px;font-size:25px;font-weight:400;color:#333333;">Обіг</div>
<div class="t " style="left:1516px;top:1313.8px;font-size:25px;font-weight:400;color:#3f7bc0;">Чеки</div>
<div class="r" style="left:656px;top:1368px;width:738px;height:32px;background:#f5f5f5;border-radius:4px;"></div>
<div class="r" style="left:656px;top:1368px;width:734px;height:32px;background:#3f7ed2;border:1px solid #2f66b0;box-sizing:border-box;border-radius:3px;"></div>
<div class="t " style="left:549px;top:1371.3px;font-size:24.5px;font-weight:400;color:#555;letter-spacing:0.1px;">Готівка</div>
<div class="t " style="right:1310px;top:1371.3px;font-size:24.5px;font-weight:400;color:#555;text-align:right;letter-spacing:-0.1px;">2 959 106,52 ₴</div>
<div class="r" style="left:656px;top:1416px;width:738px;height:32px;background:#f5f5f5;border-radius:4px;"></div>
<div class="r" style="left:656px;top:1416px;width:4px;height:32px;background:#3f7ed2;border:1px solid #2f66b0;box-sizing:border-box;border-radius:3px;"></div>
<div class="t " style="left:549px;top:1419.3px;font-size:24.5px;font-weight:400;color:#555;letter-spacing:0.1px;">Картка</div>
<div class="t " style="right:1310px;top:1419.3px;font-size:24.5px;font-weight:400;color:#555;text-align:right;letter-spacing:-0.1px;">16 755,00 ₴</div>
<div class="r" style="left:656px;top:1464px;width:738px;height:32px;background:#f5f5f5;border-radius:4px;"></div>
<div class="r" style="left:656px;top:1464px;width:2px;height:32px;background:#3f7ed2;border:1px solid #2f66b0;box-sizing:border-box;border-radius:3px;"></div>
<div class="t " style="left:549px;top:1467.3px;font-size:24.5px;font-weight:400;color:#555;letter-spacing:0.1px;">Депозит</div>
<div class="t " style="right:1310px;top:1467.3px;font-size:24.5px;font-weight:400;color:#555;text-align:right;letter-spacing:-0.1px;">50,00 ₴</div>
<div class="t " style="left:459px;width:1200px;top:1557.8px;font-size:25px;font-weight:400;color:#3f7bc0;text-align:center;">Показати всі</div>
<div class="r" style="left:1683px;top:1260px;width:1126px;height:340px;border:2px solid #e2e2e2;border-radius:8px;box-sizing:border-box;background:#fff;"></div>
<div class="r" style="left:1683px;top:1538px;width:1126px;height:2px;background:#e2e2e2;"></div>
<div class="t " style="left:1735px;top:1302.5px;font-size:36px;font-weight:700;color:#333333;letter-spacing:0.5px;">Джерела замовлень</div>
<div class="t " style="left:2641px;top:1313.8px;font-size:25px;font-weight:400;color:#333333;">Обіг</div>
<div class="t " style="left:2702px;top:1313.8px;font-size:25px;font-weight:400;color:#3f7bc0;">Чеки</div>
<div class="r" style="left:1896px;top:1368px;width:686px;height:32px;background:#f5f5f5;border-radius:4px;"></div>
<div class="r" style="left:1896px;top:1368px;width:685px;height:32px;background:#3f7ed2;border:1px solid #2f66b0;box-sizing:border-box;border-radius:3px;"></div>
<div class="t " style="left:1735px;top:1371.3px;font-size:24.5px;font-weight:400;color:#555;letter-spacing:0.1px;">У закладі</div>
<div class="t " style="right:123px;top:1371.3px;font-size:24.5px;font-weight:400;color:#555;text-align:right;letter-spacing:-0.1px;">2 975 696,52 ₴</div>
<div class="r" style="left:1896px;top:1416px;width:686px;height:32px;background:#f5f5f5;border-radius:4px;"></div>
<div class="r" style="left:1896px;top:1416px;width:2px;height:32px;background:#3f7ed2;border:1px solid #2f66b0;box-sizing:border-box;border-radius:3px;"></div>
<div class="t " style="left:1735px;top:1419.3px;font-size:24.5px;font-weight:400;color:#555;letter-spacing:0.1px;">З собою</div>
<div class="t " style="right:123px;top:1419.3px;font-size:24.5px;font-weight:400;color:#555;text-align:right;letter-spacing:-0.1px;">215,00 ₴</div>
<div class="r" style="left:1896px;top:1464px;width:686px;height:32px;background:#f5f5f5;border-radius:4px;"></div>
<div class="t " style="left:1735px;top:1467.3px;font-size:24.5px;font-weight:400;color:#555;letter-spacing:0.1px;">Доставлення</div>
<div class="t " style="right:123px;top:1467.3px;font-size:24.5px;font-weight:400;color:#555;text-align:right;letter-spacing:-0.1px;">0,00 ₴</div>
<div class="t " style="left:1646px;width:1200px;top:1557.8px;font-size:25px;font-weight:400;color:#3f7bc0;text-align:center;">Показати всі</div>
<div class="r" style="left:496px;top:1640px;width:1522px;height:200px;border:2px solid #e2e2e2;border-radius:8px;box-sizing:border-box;background:#fff;"></div>
<div class="r" style="left:2079px;top:1640px;width:730px;height:200px;border:2px solid #e2e2e2;border-radius:8px;box-sizing:border-box;background:#fff;"></div>
<div class="t " style="left:548px;top:1688.5px;font-size:36px;font-weight:700;color:#333333;">За часом</div>
<div class="t " style="left:2129px;top:1688.5px;font-size:36px;font-weight:700;color:#333333;">За днями тижня</div>
<svg class="r" style="left:1857.5px;top:1629.5px;filter:drop-shadow(1px 2px 1.5px rgba(0,0,0,0.3))" width="32" height="44" viewBox="0 0 28 40">
<path d="M4 4 L4 28.5 L10 23 L14.5 33 L19 31 L14.8 21.5 L22 21.5 Z" fill="#000" stroke="#fff" stroke-width="2.2" stroke-linejoin="round"/></svg>
</body></html>
